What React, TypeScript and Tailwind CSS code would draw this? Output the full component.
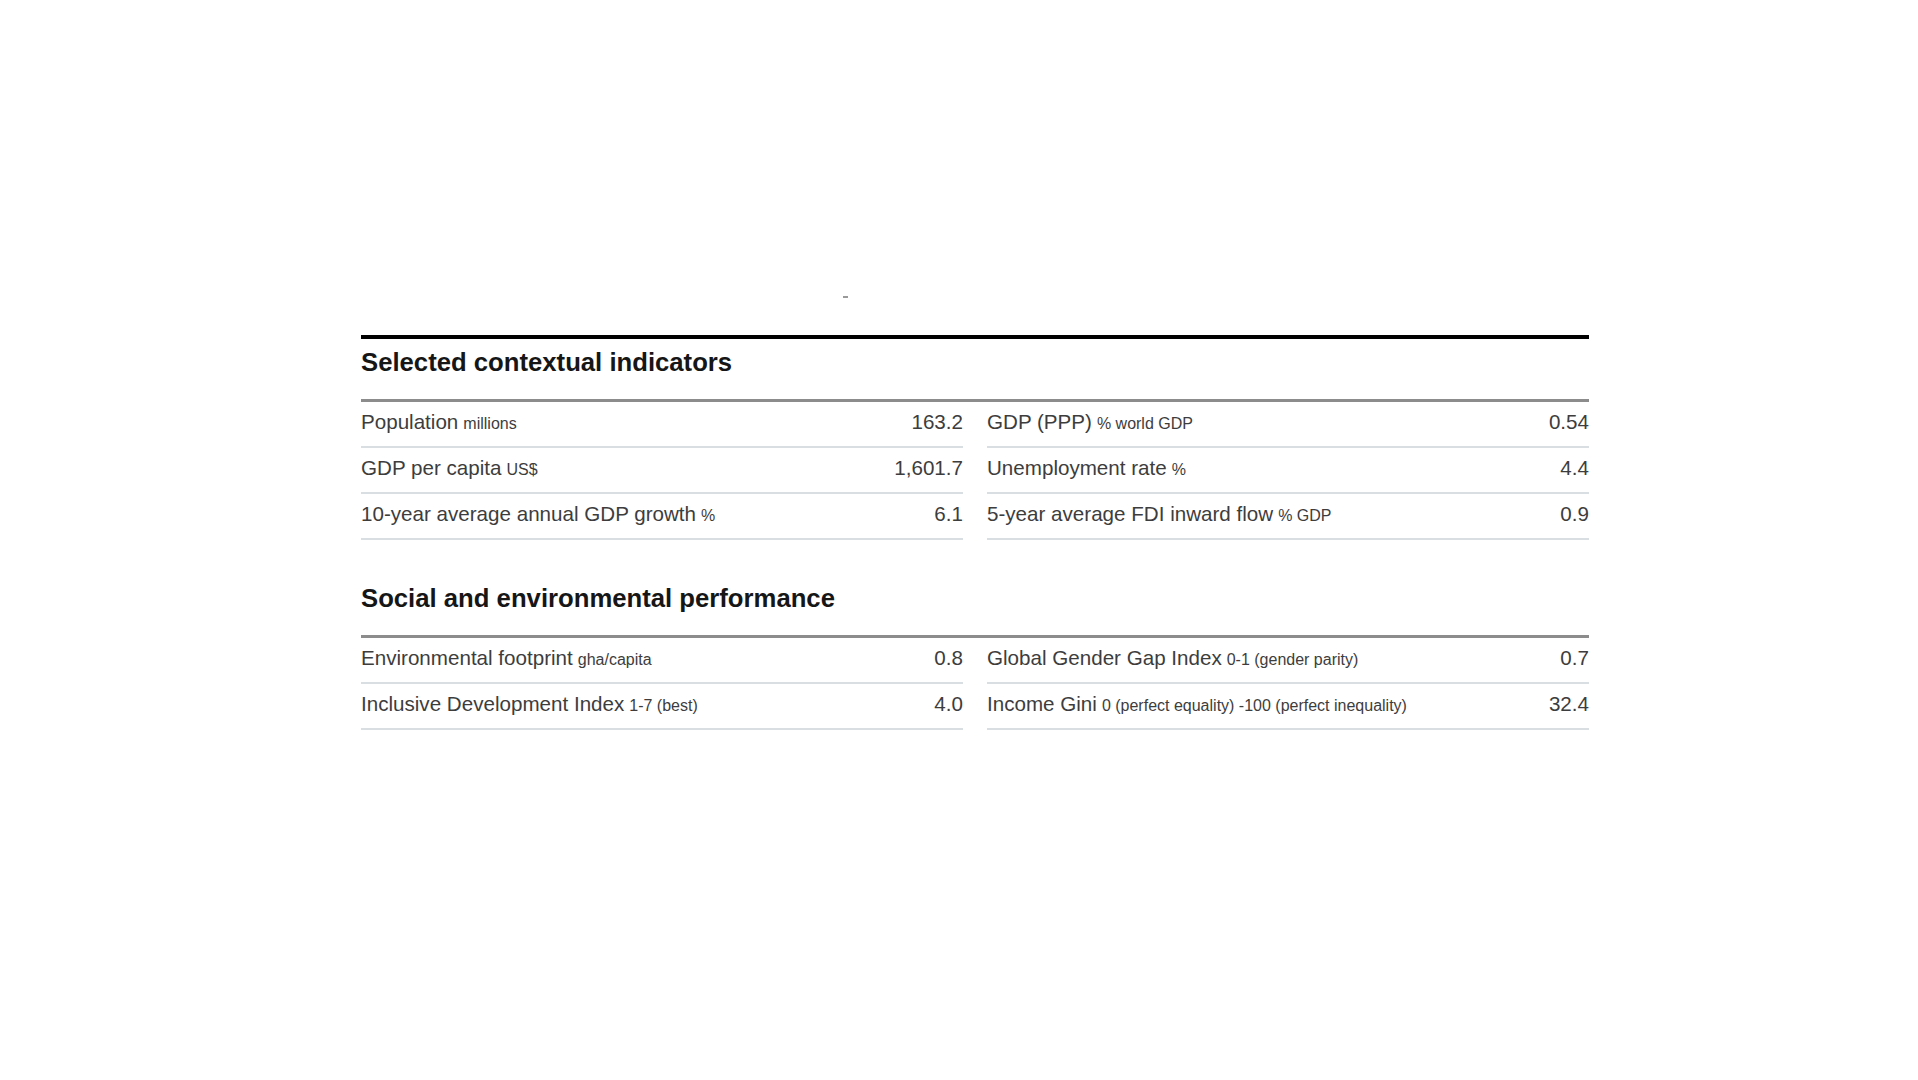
import React from "react";

type Row = { label: string; unit?: string; value: string };

const section1Left: Row[] = [
  { label: "Population", unit: "millions", value: "163.2" },
  { label: "GDP per capita", unit: "US$", value: "1,601.7" },
  { label: "10-year average annual GDP growth", unit: "%", value: "6.1" },
];
const section1Right: Row[] = [
  { label: "GDP (PPP)", unit: "% world GDP", value: "0.54" },
  { label: "Unemployment rate", unit: "%", value: "4.4" },
  { label: "5-year average FDI inward flow", unit: "% GDP", value: "0.9" },
];
const section2Left: Row[] = [
  { label: "Environmental footprint", unit: "gha/capita", value: "0.8" },
  { label: "Inclusive Development Index", unit: "1-7 (best)", value: "4.0" },
];
const section2Right: Row[] = [
  { label: "Global Gender Gap Index", unit: "0-1 (gender parity)", value: "0.7" },
  { label: "Income Gini", unit: "0 (perfect equality) -100 (perfect inequality)", value: "32.4" },
];

function DataRow({ row }: { row: Row }) {
  return (
    <div className="flex h-[46px] items-baseline justify-between border-b-2 border-[#d9dee3] pt-[8px] text-[20.6px] leading-[24px] text-[#3d3d3d]">
      <div className="whitespace-nowrap">
        {row.label}
        {row.unit && <span className="ml-[5px] text-[16px] leading-none">{row.unit}</span>}
      </div>
      <div className="whitespace-nowrap">{row.value}</div>
    </div>
  );
}

function Column({ rows }: { rows: Row[] }) {
  return (
    <div className="flex flex-col">
      {rows.map((r) => (
        <DataRow key={r.label} row={r} />
      ))}
    </div>
  );
}

function Section({ title, left, right }: { title: string; left: Row[]; right: Row[] }) {
  return (
    <div className="flex flex-col">
      <div className="text-[25.7px] leading-[30px] font-bold text-[#161616]">{title}</div>
      <div className="mt-[22px] h-[3px] bg-[#8c8c8c]" />
      <div className="grid grid-cols-2 gap-x-[24px]">
        <Column rows={left} />
        <Column rows={right} />
      </div>
    </div>
  );
}

export default function App() {
  return (
    <div
      className="min-h-screen w-full bg-white"
      style={{ fontFamily: '"Liberation Sans", Arial, Helvetica, sans-serif' }}
    >
      <div className="pt-[296px] pl-[843px]">
        <div className="h-[2px] w-[5px] bg-[#9a9a9a]" />
      </div>
      <div className="ml-[361px] mt-[37px] w-[1228px]">
        <div className="h-[4px] bg-black" />
        <div className="mt-[8px]">
          <Section title="Selected contextual indicators" left={section1Left} right={section1Right} />
        </div>
        <div className="mt-[43px]">
          <Section title="Social and environmental performance" left={section2Left} right={section2Right} />
        </div>
      </div>
    </div>
  );
}
